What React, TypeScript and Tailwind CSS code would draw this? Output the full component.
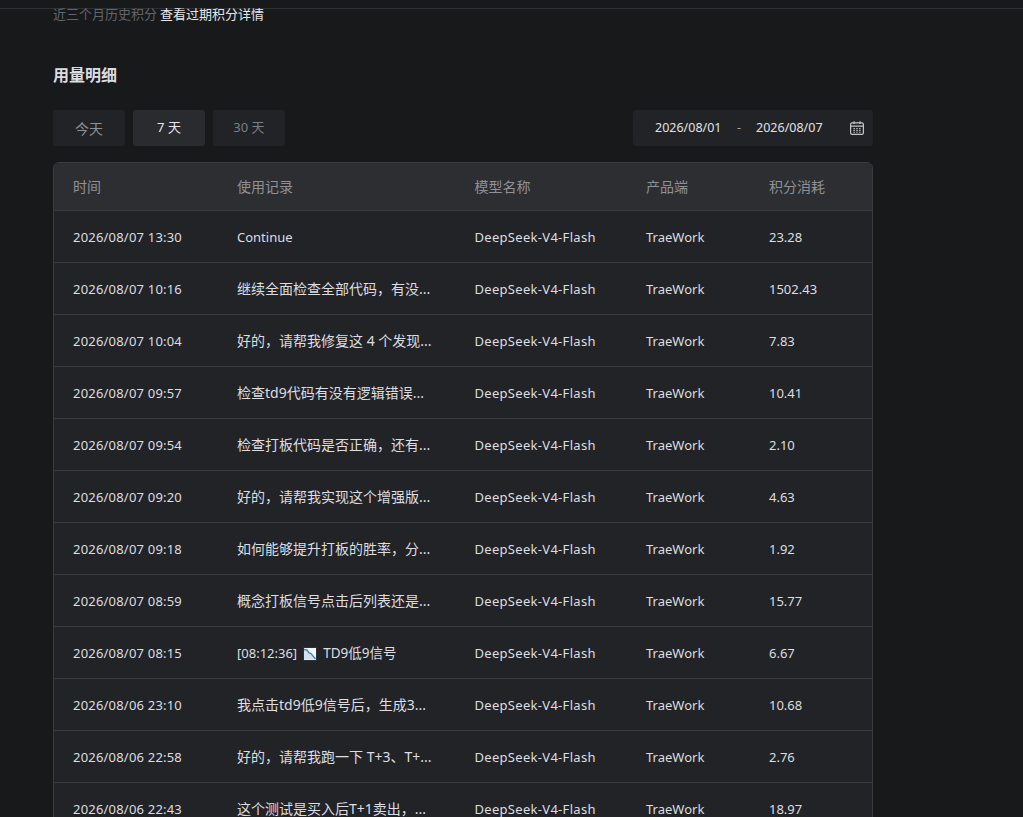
import React from 'react';

const rows = [
  { time: '2026/08/07 13:30', record: 'Continue', points: '23.28' },
  { time: '2026/08/07 10:16', record: '继续全面检查全部代码，有没...', points: '1502.43' },
  { time: '2026/08/07 10:04', record: '好的，请帮我修复这 4 个发现...', points: '7.83' },
  { time: '2026/08/07 09:57', record: '检查td9代码有没有逻辑错误...', points: '10.41' },
  { time: '2026/08/07 09:54', record: '检查打板代码是否正确，还有...', points: '2.10' },
  { time: '2026/08/07 09:20', record: '好的，请帮我实现这个增强版...', points: '4.63' },
  { time: '2026/08/07 09:18', record: '如何能够提升打板的胜率，分...', points: '1.92' },
  { time: '2026/08/07 08:59', record: '概念打板信号点击后列表还是...', points: '15.77' },
  { time: '2026/08/07 08:15', record: 'emoji', points: '6.67' },
  { time: '2026/08/06 23:10', record: '我点击td9低9信号后，生成3...', points: '10.68' },
  { time: '2026/08/06 22:58', record: '好的，请帮我跑一下 T+3、T+...', points: '2.76' },
  { time: '2026/08/06 22:43', record: '这个测试是买入后T+1卖出，...', points: '18.97' },
];

const FONT = "font-['Noto_Sans','Noto_Sans_CJK_SC',sans-serif]";

const ChartDown = () => (
  <svg width="14" height="14" viewBox="0 0 14 14" className="mx-[6px] shrink-0">
    <rect x="0.5" y="0.5" width="13" height="13" fill="#f4f5f6" stroke="#2f3033" />
    <path d="M1 3 L4 3.5 L6 6 L8 6.5 L12.5 12.5 L1 12.5 Z" fill="#d5e0ea" />
    <path d="M1 2.5 L4 3 L6 6 L8 6.5 L12.5 12" fill="none" stroke="#3f86c4" strokeWidth="1.4" />
  </svg>
);

const CalendarIcon = () => (
  <svg width="16" height="16" viewBox="0 0 16 16" fill="none" stroke="#c4c6ca" strokeWidth="1.2">
    <rect x="1.6" y="2.8" width="12.8" height="11.6" rx="1.6" />
    <path d="M1.6 6.2 H14.4 M5 1.2 V4 M11 1.2 V4" />
    <path d="M4.5 8.5h1.4M7.3 8.5h1.4M10.1 8.5h1.4M4.5 10.4h1.4M7.3 10.4h1.4M10.1 10.4h1.4M4.5 12.3h1.4M7.3 12.3h1.4M10.1 12.3h1.4" strokeWidth="1.1" />
  </svg>
);

const App: React.FC = () => {
  return (
    <div className={`h-[817px] w-full overflow-hidden bg-[#18191b] text-[13px] ${FONT}`}>
      <div className="h-[9px] border-b border-[#2f3033]" />
      <div className="w-[820px] ml-[53px]">
        <div className="flex h-[12px] items-center text-[13px] whitespace-nowrap">
          <span className="text-[#62656b]">近三个月历史积分</span>
          <span className="ml-[3px] text-[#e6e7e9]">查看过期积分详情</span>
        </div>

        <h2 className="mt-[44px] h-[20px] text-[16px] leading-[20px] font-semibold text-[#dcdde0]">用量明细</h2>

        <div className="mt-[25px] flex h-[36px] items-center justify-between">
          <div className="flex gap-2">
            <button className="h-9 w-[72px] rounded-[3px] bg-[#222326] text-[14px] text-[#8e9197]">今天</button>
            <button className="h-9 w-[72px] rounded-[3px] bg-[#2a2b2f] text-[#e6e7e9]">7 天</button>
            <button className="h-9 w-[72px] rounded-[3px] bg-[#222326] text-[#7b7e85]">30 天</button>
          </div>
          <div className="flex h-9 w-[240px] items-center rounded-[3px] bg-[#222326] pl-[22px] pr-[8px] pt-px text-[12.5px] text-[#e0e1e4]">
            <span className="w-[66px]">2026/08/01</span>
            <span className="ml-[16px] text-[#a0a3a8]">-</span>
            <span className="ml-[15px] w-[67px]">2026/08/07</span>
            <span className="ml-auto -mt-px"><CalendarIcon /></span>
          </div>
        </div>

        <div className="mt-4 rounded-t-md border border-[#3a3b3f] bg-[#222326]">
          <div className="grid h-[48px] grid-cols-[183px_237.5px_171.5px_123px_1fr] items-center rounded-t-md border-b border-[#3a3b3f] bg-[#2d2e32] text-[14px] text-[#8e9197]">
            <div className="pl-[19px]">时间</div>
            <div>使用记录</div>
            <div>模型名称</div>
            <div>产品端</div>
            <div>积分消耗</div>
          </div>
          {rows.map((row) => (
            <div
              key={row.time}
              className="grid h-[52px] grid-cols-[183px_237.5px_171.5px_123px_1fr] items-center border-b border-[#3a3b3f] text-[#dcdee1]"
            >
              <div className="pl-[19px] pt-[2px] tracking-[0.2px]">{row.time}</div>
              {row.record === 'emoji' ? (
                <div className="flex items-center whitespace-nowrap pt-[2px] text-[13.5px]">
                  <span className="text-[13px]">[08:12:36]</span>
                  <ChartDown />
                  TD9低9信号
                </div>
              ) : row.record === 'Continue' ? (
                <div className="pt-[2px] text-[13px]">{row.record}</div>
              ) : (
                <div className="whitespace-nowrap text-[14px]">{row.record}</div>
              )}
              <div className="pt-[2px] tracking-[0.3px]">DeepSeek-V4-Flash</div>
              <div className="pt-[2px]">TraeWork</div>
              <div className="pt-[2px]">{row.points}</div>
            </div>
          ))}
        </div>
      </div>
    </div>
  );
};

export default App;
